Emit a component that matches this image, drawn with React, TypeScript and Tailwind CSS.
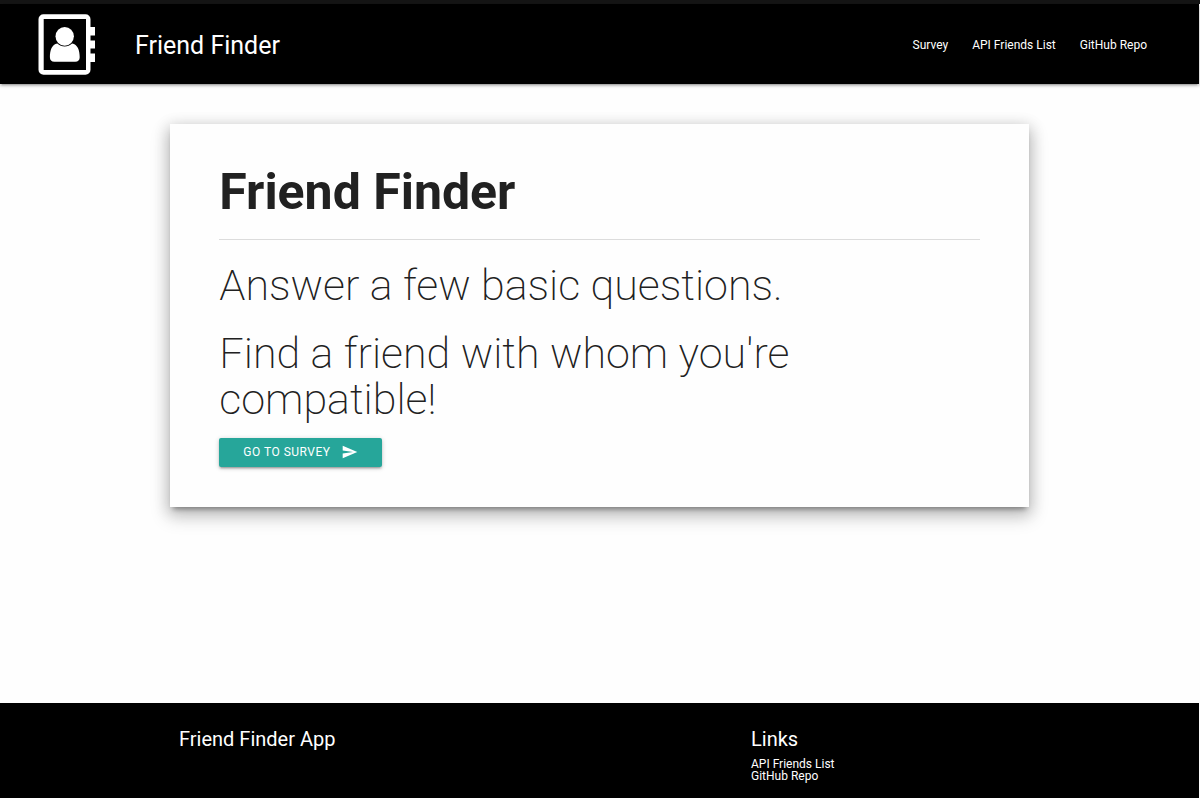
function AddressBookLogo() {
  return (
    <svg viewBox="0 1 60 64" className="h-16 w-15" fill="#fff" aria-hidden="true">
      <path
        fillRule="evenodd"
        d="M6 2.200h42.500a5 5 0 0 1 5 5v50.500a5 5 0 0 1-5 5H6.500a5 5 0 0 1-5-5V7.200a5 5 0 0 1 5-5zM6.700 7v51h42.300V7z"
      />
      <path d="M52 15h6v8.500h-6zM52 28.500h6v8h-6zM52 41.500h6v8.500h-6z" />
      <ellipse cx="27.700" cy="24.300" rx="9.200" ry="9.400" />
      <path d="M20.300 31.500c4.200 4 10.600 4 14.800 0 5.500 1 7.600 6.500 7.600 13.800 0 2.800-1.600 4.500-4.500 4.500H17.400c-2.900 0-4.500-1.700-4.500-4.500 0-7.300 2-12.800 7.400-13.800z" />
    </svg>
  );
}

export default function App() {
  return (
    <div className="flex min-h-screen flex-col bg-[#fefefe] font-['Roboto',sans-serif] text-[#212121]">
      <div className="h-1 bg-[#151515]" />
      <header className="mr-px flex h-20 items-center bg-black pt-0.5 pl-[37px] pr-[52px] text-white shadow-[0_2px_2px_0_rgba(0,0,0,0.14),0_3px_1px_-2px_rgba(0,0,0,0.12),0_1px_5px_0_rgba(0,0,0,0.2)]">
        <a href="#home" className="flex items-center gap-[38px] text-[25px] leading-8">
          <AddressBookLogo />
          <span className="pt-0.5">Friend Finder</span>
        </a>
        <nav className="ml-auto flex gap-6 text-xs">
          <a href="#survey">Survey</a>
          <a href="#api">API Friends List</a>
          <a href="#repo">GitHub Repo</a>
        </nav>
      </header>

      <main className="mr-px flex-1">
        <section className="mx-auto mt-10 w-[71.6%] bg-[#fefefe] px-[49px] pt-[41px] pb-10 shadow-[0_8px_17px_2px_rgba(0,0,0,0.2),0_3px_14px_2px_rgba(0,0,0,0.12),0_5px_5px_-3px_rgba(0,0,0,0.35)]">
          <h1 className="text-[50px] leading-[55px] font-bold">Friend Finder</h1>
          <hr className="mt-[19px] border-[#dcdcdc]" />
          <h2 className="mt-[22px] text-[43px] leading-[46px] font-extralight">
            Answer a few basic questions.
          </h2>
          <h2 className="mt-[22px] text-[43px] leading-[46px] font-extralight">
            Find a friend with whom you're compatible!
          </h2>
          <button
            type="button"
            className="mt-4 flex h-[29px] items-center gap-[11px] rounded-xs bg-[#26a69a] px-6 pb-0.5 text-xs tracking-[0.5px] text-white uppercase shadow-[0_2px_2px_0_rgba(0,0,0,0.14),0_3px_1px_-2px_rgba(0,0,0,0.12),0_1px_5px_0_rgba(0,0,0,0.2)]"
          >
            Go to survey
            <svg viewBox="1 2 23 20" className="h-[14px] w-4" fill="currentColor" aria-hidden="true">
              <path d="M2.010 21L23 12 2.010 3 2 10l15 2-15 2z" />
            </svg>
          </button>
        </section>
      </main>

      <footer className="mr-px bg-black px-[179px] pt-6 pb-4 text-white">
        <div className="grid grid-cols-[572fr_269fr]">
          <h5 className="text-xl leading-6">Friend Finder App</h5>
          <div>
            <h5 className="text-xl leading-6">Links</h5>
            <ul className="mt-[7px] text-xs leading-3">
              <li><a href="#api">API Friends List</a></li>
              <li><a href="#repo">GitHub Repo</a></li>
            </ul>
          </div>
        </div>
      </footer>
    </div>
  );
}
